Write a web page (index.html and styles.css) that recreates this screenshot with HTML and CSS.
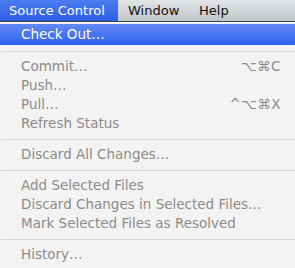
FILE: index.html
```html
<!DOCTYPE html>
<html lang="en">
<head>
    <meta charset="UTF-8">
    <title>Source Control Menu</title>
    <link rel="stylesheet" href="styles.css">
</head>
<body>
    <div class="menubar">
        <div class="menubar-item active">Source Control</div>
        <div class="menubar-item window">Window</div>
        <div class="menubar-item">Help</div>
    </div>

    <div class="menu">
        <div class="menu-item selected">Check Out…</div>
        <div class="separator"></div>
        <div class="menu-item disabled">Commit…<span class="shortcut">⌥⌘C</span></div>
        <div class="menu-item disabled">Push…</div>
        <div class="menu-item disabled">Pull…<span class="shortcut">^⌥⌘X</span></div>
        <div class="menu-item disabled">Refresh Status</div>
        <div class="separator"></div>
        <div class="menu-item disabled">Discard All Changes…</div>
        <div class="separator"></div>
        <div class="menu-item disabled">Add Selected Files</div>
        <div class="menu-item disabled">Discard Changes in Selected Files…</div>
        <div class="menu-item disabled">Mark Selected Files as Resolved</div>
        <div class="separator"></div>
        <div class="menu-item disabled">History…</div>
    </div>
</body>
</html>
```

FILE: styles.css
```css
* {
    margin: 0;
    padding: 0;
    box-sizing: border-box;
}

body {
    font-family: 'DejaVu Sans', 'Lucida Grande', sans-serif;
    font-size: 13.5px;
    background: #f3f3f3;
    width: 295px;
    height: 268px;
    overflow: hidden;
}

.menubar {
    display: flex;
    height: 22px;
    background: linear-gradient(#e2e4e6, #c4c7ca);
    border-bottom: 1px solid #3c4046;
}

.menubar-item {
    padding-left: 9px;
    line-height: 21px;
    font-size: 13px;
    white-space: nowrap;
    color: #111;
}

.menubar-item.active {
    width: 118px;
    color: #fff;
    background: linear-gradient(#4b7cf0, #2d5ee6);
}

.menubar-item.window {
    width: 72px;
    padding-left: 10px;
}

.menu {
    padding-top: 1px;
    background: #f3f3f3;
    border-top: 1px solid #fff;
}

.menu-item {
    display: flex;
    justify-content: space-between;
    height: 19px;
    line-height: 19px;
    padding: 0 14px 0 21px;
    white-space: nowrap;
    color: #222;
}

.menu-item.selected {
    height: 21px;
    line-height: 21px;
    color: #fff;
    background: linear-gradient(#6389f4, #2c61ef);
}

.menu-item.disabled {
    color: #8e8b89;
}

.shortcut {
    letter-spacing: 0.5px;
}

.separator {
    height: 1px;
    margin: 6px 0 5px 1px;
    background: #d6d6d6;
}
```
